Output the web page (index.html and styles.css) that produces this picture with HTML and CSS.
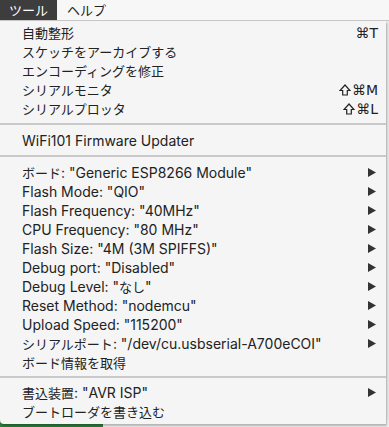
FILE: index.html
```html
<!DOCTYPE html>
<html lang="ja">
<head>
  <meta charset="UTF-8">
  <meta name="viewport" content="width=device-width, initial-scale=1">
  <title>ツール</title>
  <link rel="stylesheet" href="styles.css">
</head>
<body>
  <div class="menubar">
    <span class="menu-title active ja">ツール</span>
    <span class="menu-title ja">ヘルプ</span>
  </div>

  <div class="menu">
    <div class="item"><span class="label ja">自動整形</span><span class="key">⌘T</span></div>
    <div class="item"><span class="label ja">スケッチをアーカイブする</span></div>
    <div class="item"><span class="label ja">エンコーディングを修正</span></div>
    <div class="item"><span class="label ja">シリアルモニタ</span><span class="key"><svg class="shift" viewBox="0 0 12 12"><path d="M6 1 L11 6.5 H8.3 V11 H3.7 V6.5 H1 Z"/></svg>⌘M</span></div>
    <div class="item"><span class="label ja">シリアルプロッタ</span><span class="key"><svg class="shift" viewBox="0 0 12 12"><path d="M6 1 L11 6.5 H8.3 V11 H3.7 V6.5 H1 Z"/></svg>⌘L</span></div>

    <div class="sep"></div>

    <div class="item"><span class="label">WiFi101 Firmware Updater</span></div>

    <div class="sep"></div>

    <div class="item"><span class="label"><span class="ja">ボード</span>: "Generic ESP8266 Module"</span><svg class="arrow" viewBox="0 0 8 9"><polygon points="0,0 8,4.5 0,9"/></svg></div>
    <div class="item"><span class="label">Flash Mode: "QIO"</span><svg class="arrow" viewBox="0 0 8 9"><polygon points="0,0 8,4.5 0,9"/></svg></div>
    <div class="item"><span class="label">Flash Frequency: "40MHz"</span><svg class="arrow" viewBox="0 0 8 9"><polygon points="0,0 8,4.5 0,9"/></svg></div>
    <div class="item"><span class="label">CPU Frequency: "80 MHz"</span><svg class="arrow" viewBox="0 0 8 9"><polygon points="0,0 8,4.5 0,9"/></svg></div>
    <div class="item"><span class="label">Flash Size: "4M (3M SPIFFS)"</span><svg class="arrow" viewBox="0 0 8 9"><polygon points="0,0 8,4.5 0,9"/></svg></div>
    <div class="item"><span class="label">Debug port: "Disabled"</span><svg class="arrow" viewBox="0 0 8 9"><polygon points="0,0 8,4.5 0,9"/></svg></div>
    <div class="item"><span class="label">Debug Level: "<span class="ja">なし</span>"</span><svg class="arrow" viewBox="0 0 8 9"><polygon points="0,0 8,4.5 0,9"/></svg></div>
    <div class="item"><span class="label">Reset Method: "nodemcu"</span><svg class="arrow" viewBox="0 0 8 9"><polygon points="0,0 8,4.5 0,9"/></svg></div>
    <div class="item"><span class="label">Upload Speed: "115200"</span><svg class="arrow" viewBox="0 0 8 9"><polygon points="0,0 8,4.5 0,9"/></svg></div>
    <div class="item"><span class="label"><span class="ja">シリアルポート</span>: "/dev/cu.usbserial-A700eCOI"</span><svg class="arrow" viewBox="0 0 8 9"><polygon points="0,0 8,4.5 0,9"/></svg></div>
    <div class="item"><span class="label ja">ボード情報を取得</span></div>

    <div class="sep last"></div>

    <div class="item"><span class="label"><span class="ja">書込装置</span>: "AVR ISP"</span><svg class="arrow" viewBox="0 0 8 9"><polygon points="0,0 8,4.5 0,9"/></svg></div>
    <div class="item"><span class="label ja">ブートローダを書き込む</span></div>
  </div>

  <div class="desk"><div class="desk-green"></div></div>
</body>
</html>
```

FILE: styles.css
```css
body {
  margin: 0;
  padding: 0;
  width: 389px;
  height: 427px;
  overflow: hidden;
  background-color: #e8e8e8;
  font-family: "Inter", "Noto Sans CJK JP", sans-serif;
  font-size: 14px;
  color: #222;
}

.ja {
  font-family: "Noto Sans CJK JP", sans-serif;
  font-size: 13px;
}

/* top bar */
.menubar {
  height: 20px;
  display: flex;
  background-color: #f7f7f7;
  border-bottom: 1px solid #c6c6c6;
}

.menu-title {
  display: flex;
  align-items: center;
  padding: 0 9px;
  line-height: 20px;
  white-space: nowrap;
}

.menu-title.active {
  background-color: #3d3d3d;
  color: #fff;
  margin-right: 1px;
}

/* drop-down panel */
.menu {
  width: 386px;
  background-color: #f5f5f5;
  padding: 2px 0 3px 0;
  border-bottom-left-radius: 4px;
  box-shadow: 1px 2px 2px rgba(0,0,0,0.25);
  position: relative;
  z-index: 1;
}

.item {
  height: 19px;
  display: flex;
  align-items: center;
  padding: 0 8px 0 22px;
  white-space: nowrap;
}

.label {
  flex: 1;
}

.key {
  display: flex;
  align-items: center;
  font-family: "DejaVu Sans", sans-serif;
  font-size: 14px;
  color: #222;
}

.shift {
  width: 12px;
  height: 12px;
  margin-right: 1px;
  fill: none;
  stroke: #222;
  stroke-width: 1.2;
}

.arrow {
  width: 8px;
  height: 9px;
  margin-right: 2px;
  fill: #333;
}

.sep {
  height: 2px;
  margin: 5px 0 6px 0;
  background-color: #c9c9c9;
}

.sep.last {
  margin: 4px 0 5px 0;
}

/* what shows under the menu */
.desk {
  height: 10px;
  margin-top: -4px;
  background-color: #f0f0f0;
}

.desk-green {
  width: 103px;
  height: 100%;
  background-color: #2f7d3a;
}
```
